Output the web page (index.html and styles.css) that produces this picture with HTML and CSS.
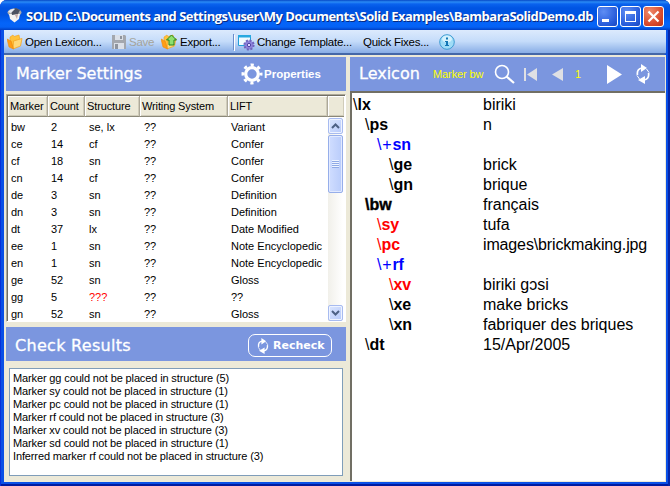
FILE: index.html
```html
<!DOCTYPE html>
<html lang="en">
<head>
<meta charset="utf-8">
<title>SOLID</title>
<link rel="stylesheet" href="styles.css">
</head>
<body>
<svg width="0" height="0" class="defs">
  <defs>
    <symbol id="refresh" viewBox="0 0 14 20">
      <path d="M1.500 11Q.5 5 6 4M12.500 9Q13.500 15 8 16" fill="none" stroke="currentColor" stroke-width="1.700"/>
      <path d="M5 0v8l6-4zM9 12v8l-7-4z" fill="currentColor"/>
      <path d="M10.500 5l2.500 3.500M3.500 15L1 11.500" stroke="currentColor" stroke-width="1"/>
    </symbol>
    <symbol id="folder" viewBox="0 0 16 16">
      <path d="M3 5V3l3-2 1 1.500L12 1l1 5-7 8z" fill="#ffc23a" stroke="#f0a020" stroke-width=".6"/>
      <path d="M6.500 7L15 4.500 13.500 12 6 15z" fill="#ffd978" stroke="#f5a623" stroke-width=".8"/>
      <path d="M0 5l4 2 2.500 8L2 13z" fill="#ff9d14" stroke="#f08a08" stroke-width=".6"/>
    </symbol>
  </defs>
</svg>
<div class="window">
  <header class="titlebar">
    <svg class="appicon" width="16" height="16" viewBox="0 0 16 16"><ellipse cx="7.500" cy="5.500" rx="7" ry="4" fill="#a9aaad"/><path d="M2 7h11l-1 5-4.500 3.500L3 12z" fill="#f5f3f1"/><path d="M4 3l5-2 4 2-2 4-6 1z" fill="#4d5260"/><path d="M1 5q3-4 7-3L4 6z" fill="#e8eaf0"/><path d="M8 8l3-1-1 5z" fill="#c4a8a4"/></svg>
    <h1>SOLID C:\Documents and Settings\user\My Documents\Solid Examples\BambaraSolidDemo.db</h1>
    <div class="controls">
      <span class="ctl"><svg width="19" height="19"><path d="M4 12h7v3H4z" fill="#fff"/></svg></span>
      <span class="ctl"><svg width="19" height="19"><path d="M4 4h11v11H4zM5 7v7h9V7z" fill="#fff" fill-rule="evenodd"/></svg></span>
      <span class="ctl close"><svg width="19" height="19"><path d="M4.500 4.500l10 10M14.500 4.500l-10 10" stroke="#fff" stroke-width="2.200"/></svg></span>
    </div>
  </header>
  <nav class="toolbar">
    <span class="tool open"><svg width="16" height="16"><use href="#folder"/></svg><b>Open Lexicon...</b></span>
    <span class="tool save"><svg width="16" height="16" viewBox="0 0 16 16"><path d="M1 1h13l1 1v13H1z" fill="#a3a7ae"/><path d="M4 1h8v5H4zM3 9h10v6H3z" fill="#dbe0e8"/><path d="M9 2h2v3H9zM4 10h3v5H4z" fill="#8e949e"/></svg><b>Save</b></span>
    <span class="tool export"><svg width="17" height="16" viewBox="0 0 17 16"><use href="#folder" width="16" height="16"/><path d="M10.500 1l5 5h-2.500v5h-5V6H5.500z" fill="#8ee070" stroke="#24861c"/></svg><b>Export...</b></span>
    <i class="sep"></i>
    <span class="tool template"><svg width="17" height="17" viewBox="0 0 17 17"><path d="M.5 1.500h12v10H.5z" fill="#f2fbff" stroke="#239fd8"/><path d="M0 1h13v2.500H0z" fill="#2aa9e0"/><circle cx="11" cy="11" r="4.600" fill="#8e83dc" stroke="#6f64bd" stroke-width="2" stroke-dasharray="2 1.600"/><circle cx="11" cy="11" r="1.700" fill="#dcd8ff" stroke="#5145a5"/></svg><b>Change Template...</b></span>
    <span class="tool fixes"><b>Quick Fixes...</b></span>
    <svg class="info" width="16" height="16"><circle cx="8" cy="8" r="7.300" fill="#9fdcf7" stroke="#3f9bd2"/><ellipse cx="8" cy="5" rx="5" ry="3.500" fill="#d5f2fd"/><path d="M7 3.500h2v2H7zM6 7h3v4h1v1H6v-1h1V8H6z" fill="#1377b5"/></svg>
  </nav>
  <main>
    <section class="left">
      <div class="band">
        <h2 class="t-settings">Marker Settings</h2>
        <div class="props">
          <svg width="22" height="22" viewBox="-11 -11 22 22"><circle r="6.300" fill="none" stroke="#fff" stroke-width="3.200"/><circle r="9" fill="none" stroke="#fff" stroke-width="3" stroke-dasharray="3.200 3.855" stroke-dashoffset="1.600"/></svg>
          <b>Properties</b>
        </div>
      </div>
      <div class="grid">
        <div class="cols head"><span>Marker</span><span>Count</span><span>Structure</span><span>Writing System</span><span>LIFT</span><span></span></div>
        <div class="gridbody">
          <div class="rows">
            <div class="cols"><span>bw</span><span>2</span><span>se, lx</span><span>??</span><span>Variant</span></div>
            <div class="cols"><span>ce</span><span>14</span><span>cf</span><span>??</span><span>Confer</span></div>
            <div class="cols"><span>cf</span><span>18</span><span>sn</span><span>??</span><span>Confer</span></div>
            <div class="cols"><span>cn</span><span>14</span><span>cf</span><span>??</span><span>Confer</span></div>
            <div class="cols"><span>de</span><span>3</span><span>sn</span><span>??</span><span>Definition</span></div>
            <div class="cols"><span>dn</span><span>3</span><span>sn</span><span>??</span><span>Definition</span></div>
            <div class="cols"><span>dt</span><span>37</span><span>lx</span><span>??</span><span>Date Modified</span></div>
            <div class="cols"><span>ee</span><span>1</span><span>sn</span><span>??</span><span>Note Encyclopedic</span></div>
            <div class="cols"><span>en</span><span>1</span><span>sn</span><span>??</span><span>Note Encyclopedic</span></div>
            <div class="cols"><span>ge</span><span>52</span><span>sn</span><span>??</span><span>Gloss</span></div>
            <div class="cols"><span>gg</span><span>5</span><span class="red">???</span><span>??</span><span>??</span></div>
            <div class="cols"><span>gn</span><span>52</span><span>sn</span><span>??</span><span>Gloss</span></div>
          </div>
          <div class="scroll">
            <span class="sbtn"><svg width="9" height="6"><path d="M1 5l3.500-3.500L8 5" fill="none" stroke="#4d6185" stroke-width="2"/></svg></span>
            <span class="thumb"><i></i></span>
            <span class="sbtn last"><svg width="9" height="6"><path d="M1 1l3.500 3.500L8 1" fill="none" stroke="#4d6185" stroke-width="2"/></svg></span>
          </div>
        </div>
      </div>
      <div class="band check">
        <h2 class="t-check">Check Results</h2>
        <div class="recheck"><svg width="12" height="16"><use href="#refresh"/></svg><b>Recheck</b></div>
      </div>
      <div class="results">
        <p>Marker gg could not be placed in structure (5)</p>
        <p>Marker sy could not be placed in structure (1)</p>
        <p>Marker pc could not be placed in structure (1)</p>
        <p>Marker rf could not be placed in structure (3)</p>
        <p>Marker xv could not be placed in structure (3)</p>
        <p>Marker sd could not be placed in structure (1)</p>
        <p>Inferred marker rf could not be placed in structure (3)</p>
      </div>
    </section>
    <section class="right">
      <div class="band">
        <h2 class="t-lex">Lexicon</h2>
        <span class="marker">Marker bw</span>
        <svg class="find" width="22" height="20"><circle cx="8" cy="8" r="6.500" fill="none" stroke="#fff" stroke-width="1.600"/><path d="M12.500 12.500l7.500 6.500" stroke="#fff" stroke-width="2.200"/></svg>
        <svg class="first" width="14" height="13"><path d="M0 0h2v13H0zM13 0v13L3 6.500z" fill="#dfe0e4"/></svg>
        <svg class="prev" width="11" height="13"><path d="M11 0v13L0 6.500z" fill="#dfe0e4"/></svg>
        <span class="num">1</span>
        <svg class="next" width="15" height="19"><path d="M0 0v19l15-9.500z" fill="#fff"/></svg>
        <svg class="again" width="14" height="20"><use href="#refresh"/></svg>
      </div>
      <div class="entry">
        <div class="line"><b><em>\</em>lx</b><span>biriki</span></div>
        <div class="line i1"><b><em>\</em>ps</b><span>n</span></div>
        <div class="line i2 blue"><b><em class="inferred">\+</em>sn</b></div>
        <div class="line i3"><b><em>\</em>ge</b><span>brick</span></div>
        <div class="line i3"><b><em>\</em>gn</b><span>brique</span></div>
        <div class="line i1 current"><b>\bw</b><span>français</span></div>
        <div class="line i2"><b class="red"><em>\</em>sy</b><span>tufa</span></div>
        <div class="line i2"><b class="red"><em>\</em>pc</b><span class="path">images\brickmaking.jpg</span></div>
        <div class="line i2 blue"><b><em class="inferred">\+</em>rf</b></div>
        <div class="line i3"><b class="red"><em>\</em>xv</b><span>biriki gɔsi</span></div>
        <div class="line i3"><b><em>\</em>xe</b><span>make bricks</span></div>
        <div class="line i3"><b><em>\</em>xn</b><span>fabriquer des briques</span></div>
        <div class="line i1"><b><em>\</em>dt</b><span>15/Apr/2005</span></div>
      </div>
    </section>
  </main>
</div>
</body>
</html>
```
FILE: styles.css
```css
* { box-sizing: border-box; }
body, h1, h2, p { margin: 0; }
body { width: 670px; height: 486px; overflow: hidden; background: #fff; font: 11px/13px "Liberation Sans", Arial, sans-serif; color: #000; white-space: nowrap; }
svg { display: block; flex: none; }
.defs { position: absolute; }
.window { width: 670px; height: 486px; padding: 0 4px 4px; border-radius: 7px 7px 0 0; background: #0a50e6; box-shadow: inset 1px 0 #0831d9, inset -2px 0 #0526a8, inset 0 -2px #001ba0; overflow: hidden; display: flex; flex-direction: column; }
.titlebar { height: 30px; flex: none; margin: 0 -4px; padding: 1px 6px 0 7px; display: flex; align-items: center; background: linear-gradient(#0648c6 0, #2a8bf5 2px, #0a62ee 4px, #0054e3 8px, #0054e3 15px, #0464f9 23px, #0562f5 27px, #0040c4 30px); }
.titlebar h1 { font: bold 13px/16px "Open Sans", "Noto Sans", sans-serif; color: #fff; text-shadow: 1px 1px #082a80; margin: 1px 0 0 3px; letter-spacing: -.51px; width: 568px; }
.appicon { margin-top: -1px; }
.controls { display: flex; gap: 2px; margin: 2px 0 0 auto; }
.ctl { width: 21px; height: 21px; border: 1px solid #fff; border-radius: 3px; background: radial-gradient(circle at 30% 25%, #5e8df4, #265ad9 70%, #1a46bd); }
.close { background: radial-gradient(circle at 30% 25%, #ef8a6c, #d8482a 65%, #b9341a); }
.toolbar { height: 25px; flex: none; background: linear-gradient(#dceafd, #c5dcfa 45%, #88ade6 92%, #4467a8 93%, #4467a8); display: flex; align-items: center; padding: 0 0 1px 3px; border-radius: 0 0 3px 0; }
.tool { display: flex; align-items: center; gap: 2px; }
.tool b { font-weight: 400; font-size: 11.500px; letter-spacing: -.26px; }
.open { width: 104px; } .save { width: 50px; color: #a5a49b; } .export { width: 72px; }
.sep { width: 1px; height: 16px; background: #6a8ccb; box-shadow: 1px 1px #fff; margin-right: 4px; }
.template { width: 125px; } .fixes { width: 76px; }
main { flex: 1; display: flex; gap: 4px; background: #ece9d8; padding: 2px 1px 0 2px; min-height: 0; }
.left { width: 340px; display: flex; flex-direction: column; }
.right { width: 315px; display: flex; flex-direction: column; }
.band { height: 34px; flex: none; background: #7b96df; color: #fff; display: flex; align-items: center; }
h2 { font: 16px/20px "DejaVu Sans", sans-serif; -webkit-text-stroke: .3px #fff; }
.t-settings { margin-left: 10px; width: 225px; }
.props { display: flex; align-items: center; gap: 1px; }
.props b { font-size: 11.500px; }
.grid { margin-top: 3px; height: 228px; flex: none; border: 1px solid #aca899; border-right-color: #fff; border-bottom-color: #fff; box-shadow: inset 1px 1px #716f64; padding: 1px; background: #fff; }
.cols { display: grid; grid-template-columns: 40px 37px 55px 88px 100px 1fr; height: 17px; align-items: center; }
.cols span { padding-left: 3px; }
.rows .cols span:nth-child(n+3) { padding-left: 4px; }
.rows .cols span:nth-child(5) { padding-left: 3px; }
.head { height: 21px; background: #ece9d8; }
.head span { height: 21px; line-height: 21px; border-right: 1px solid #aca899; border-bottom: 1px solid #8b8878; box-shadow: inset 1px 1px #fff, inset -1px -1px #d0ccba; padding-left: 2px; letter-spacing: -.12px; }
.head span:last-child { border-right: 0; }
.gridbody { display: flex; height: 204px; padding-top: 1px; }
.rows { flex: 1; margin: 1px -8px 0 0; }
.scroll { width: 15px; margin-right: 1px; background: linear-gradient(90deg, #f1f0ea, #fff); display: flex; flex-direction: column; height: 203px; flex: none; }
.rows .cols { grid-template-columns: 40px 37px 55px 88px 1fr; }
.sbtn { height: 16px; border: 1px solid #a7bbf0; border-radius: 2px; background: linear-gradient(135deg, #dbe6ff, #b6c9fa); display: grid; place-items: center; box-shadow: inset 0 0 0 1px #eef3ff; }
.thumb { height: 58px; margin-top: 1px; border: 1px solid #96aeea; border-radius: 2px; background: linear-gradient(90deg, #d0ddff, #b9ccfb); display: grid; place-items: center; box-shadow: inset 0 0 0 1px #e2eaff; }
.thumb i { width: 7px; height: 8px; background: repeating-linear-gradient(#eef4ff 0 1px, #8fa9e6 1px 2px); }
.last { margin-top: auto; }
.check { margin-top: 5px; }
.t-check { margin: 3px 0 0 9px; width: 233px; letter-spacing: .3px; }
.recheck { width: 84px; height: 23px; margin-top: 3px; border: 1px solid #fff; border-radius: 7px; display: flex; align-items: center; gap: 4px; padding-left: 8px; }
.recheck b { font: bold 11px/14px "DejaVu Sans", sans-serif; }
.results { margin: 7px 3px 0; width: 334px; height: 108px; border: 1px solid #7f9db9; background: #fff; padding: 3px; letter-spacing: -.13px; }
.marker { color: #ff0; letter-spacing: -.1px; } .num { color: #ff0; }
.t-lex { margin-left: 9px; width: 74px; }
.marker { width: 61px; }
.find { width: 22px; margin-right: 8px; } .first { margin-right: 14px; } .prev { margin-right: 12px; }
.num { width: 32px; } .next { margin-right: 14px; }
.entry { flex: 1; border-left: 2px solid #716f64; border-top: 2px solid #716f64; background: #fff; margin-bottom: 1px; padding: 2px 0 0 1px; }
.line { height: 20px; line-height: 20px; display: flex; font-size: 16px; }
.line b { width: 130px; }
.line em { font-style: normal; font-weight: 400; }
.inferred { letter-spacing: .8px; }
.path { letter-spacing: -.14px; }
.current b { -webkit-text-stroke: .4px #000; }
.i1 b { padding-left: 12px; } .i2 b { padding-left: 24px; } .i3 b { padding-left: 36px; }
.blue { color: #00f; } .red { color: #f00; }
```
